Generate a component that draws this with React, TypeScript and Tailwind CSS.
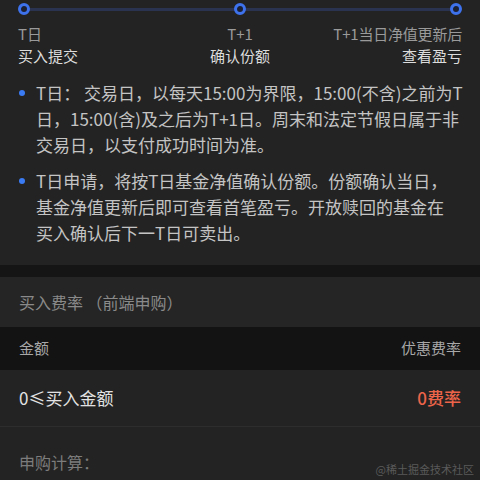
import React from "react";

const font = { fontFamily: '"Noto Sans CJK SC", "Noto Sans", sans-serif' };

function Dot() {
  return (
    <div className="relative z-10 h-[12px] w-[12px] rounded-full border-[3px] border-[#3d72ec] bg-[#1b2033]" />
  );
}

function Bullet({ lines }: { lines: string[] }) {
  return (
    <div className="flex">
      <div className="flex w-[36px] shrink-0 justify-start pl-[19px] pt-[10px]">
        <div className="h-[6px] w-[6px] rounded-full bg-[#3a7bf3]" />
      </div>
      <div className="text-[17px] leading-[26px] text-[#c4c4c4] whitespace-nowrap">
        {lines.map((l, i) => (
          <div key={i}>{l}</div>
        ))}
      </div>
    </div>
  );
}

export default function App() {
  return (
    <div
      className="relative h-[480px] w-[480px] overflow-hidden bg-[#232323]"
      style={font}
    >
      {/* progress track */}
      <div className="relative mx-[18px] mt-[3px] flex h-[12px] items-center justify-between">
        <div className="absolute left-[6px] right-[6px] top-[5px] h-[3px] bg-[#2a3350]" />
        <Dot />
        <Dot />
        <Dot />
      </div>

      <div className="mt-[8px] grid grid-cols-3 px-[18px] text-[15px] leading-[22px]">
        <div className="text-[#9a9a9a]">T日</div>
        <div className="text-center text-[#9a9a9a]">T+1</div>
        <div className="text-right text-[#9a9a9a] whitespace-nowrap tracking-[-0.2px]">T+1当日净值更新后</div>
        <div className="text-[#dcdcdc]">买入提交</div>
        <div className="text-center text-[#dcdcdc]">确认份额</div>
        <div className="text-right text-[#dcdcdc]">查看盈亏</div>
      </div>

      <div className="mt-[13px] flex flex-col gap-[10px] pb-[19px]">
        <Bullet
          lines={[
            "T日： 交易日，以每天15:00为界限，15:00(不含)之前为T",
            "日，15:00(含)及之后为T+1日。周末和法定节假日属于非",
            "交易日，以支付成功时间为准。",
          ]}
        />
        <Bullet
          lines={[
            "T日申请，将按T日基金净值确认份额。份额确认当日，",
            "基金净值更新后即可查看首笔盈亏。开放赎回的基金在",
            "买入确认后下一T日可卖出。",
          ]}
        />
      </div>

      <div className="h-[12px] bg-[#151515]" />

      <div className="flex h-[50px] items-center bg-[#252525] px-[19px] text-[16px] text-[#8a8a8a]">
        买入费率 （前端申购）
      </div>

      <div className="flex h-[43px] items-center justify-between bg-[#131313] px-[19px] text-[15px] text-[#a8a8a8]">
        <span>金额</span>
        <span>优惠费率</span>
      </div>

      <div className="flex h-[57px] items-center justify-between border-b border-[#2d2d2d] px-[19px] text-[17px]">
        <span className="text-[#e2e2e2]">0≤买入金额</span>
        <span className="font-medium text-[#ec6449]">0费率</span>
      </div>

      <div className="px-[19px] pt-[24px] text-[16px] leading-[22px] text-[#7c7c7c]">
        申购计算：
      </div>

      <div className="absolute bottom-[3px] right-[6px] text-[11px] text-[#5a5a5a]">
        @稀土掘金技术社区
      </div>
    </div>
  );
}
